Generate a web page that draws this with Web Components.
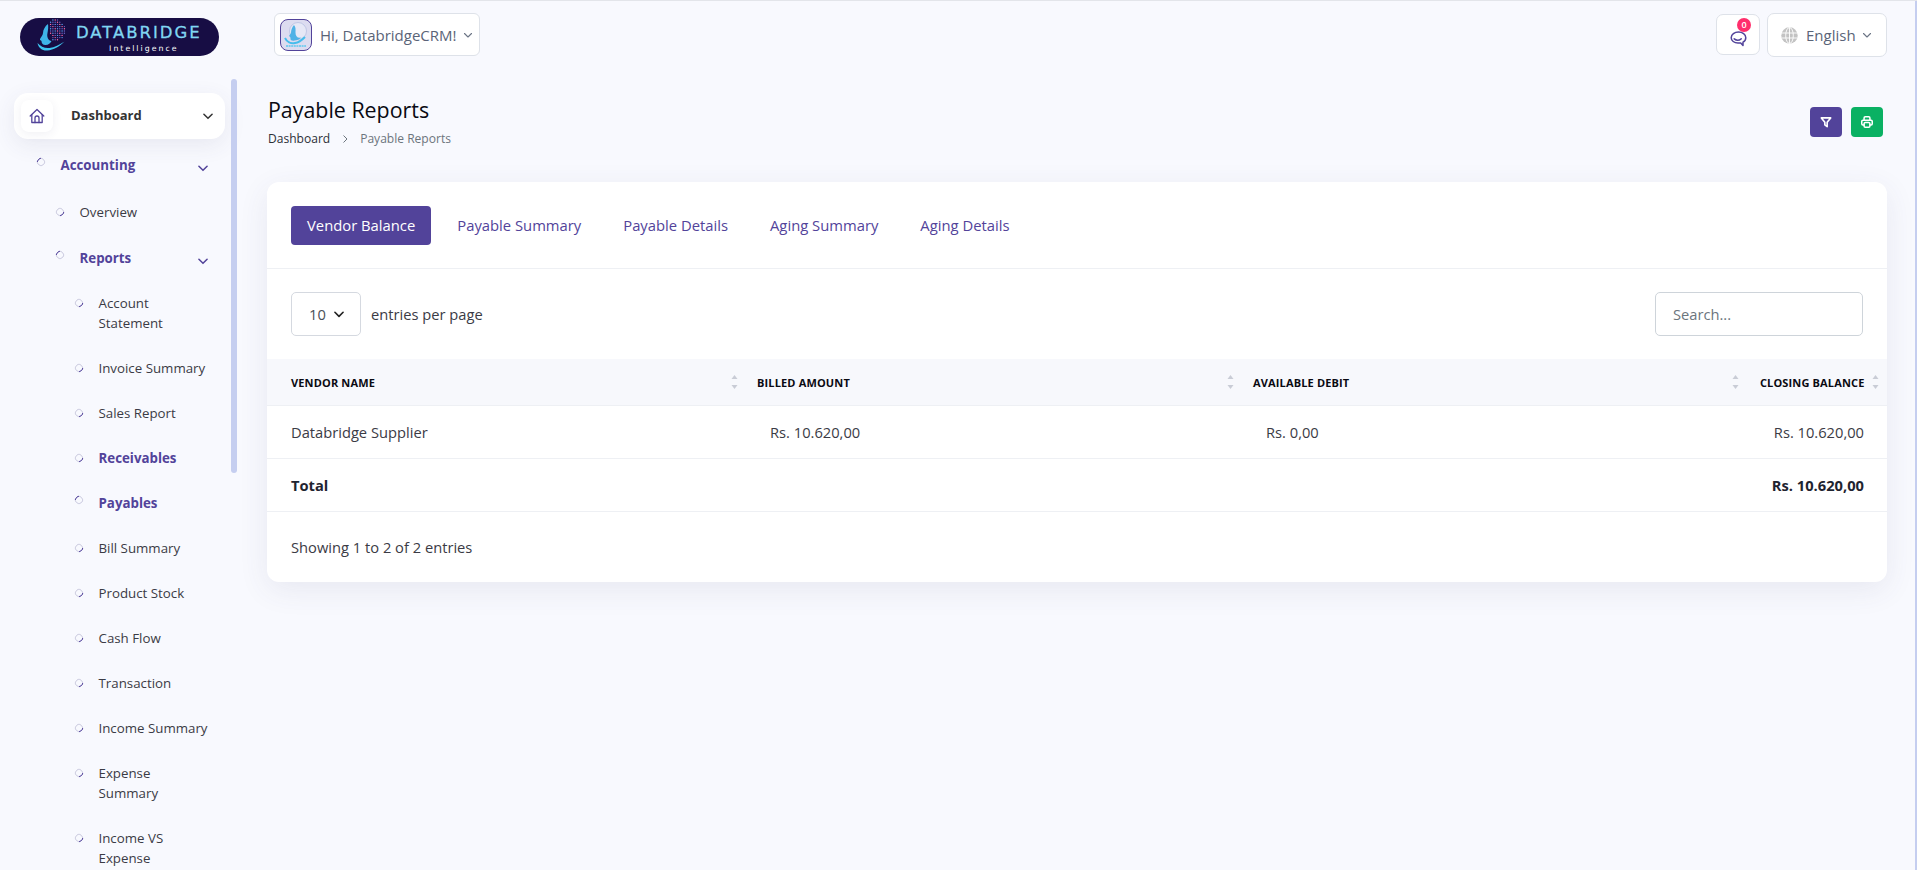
<!DOCTYPE html>
<html lang="en">
<head>
<meta charset="utf-8">
<title>Payable Reports</title>
<style>
  html, body { margin: 0; height: 100%; overflow: hidden; }
  body {
    background: #f8f9fe;
    font-family: "Open Sans", "Liberation Sans", sans-serif;
    color: #333;
    border-top: 1px solid #e3e5ea;
    box-sizing: border-box;
  }
</style>
</head>
<body>
<app-shell>
  <top-bar slot="top">
    <brand-logo></brand-logo>
    <user-menu name="Hi, DatabridgeCRM!"></user-menu>
    <chat-button slot="right" count="0"></chat-button>
    <lang-menu slot="right" lang-name="English"></lang-menu>
  </top-bar>

  <side-nav slot="side">
    <nav-home>Dashboard</nav-home>
    <nav-item level="1" active parent>Accounting</nav-item>
    <nav-item level="2">Overview</nav-item>
    <nav-item level="2" active parent>Reports</nav-item>
    <nav-item level="3">Account Statement</nav-item>
    <nav-item level="3">Invoice Summary</nav-item>
    <nav-item level="3">Sales Report</nav-item>
    <nav-item level="3" bold>Receivables</nav-item>
    <nav-item level="3" active>Payables</nav-item>
    <nav-item level="3">Bill Summary</nav-item>
    <nav-item level="3">Product Stock</nav-item>
    <nav-item level="3">Cash Flow</nav-item>
    <nav-item level="3">Transaction</nav-item>
    <nav-item level="3">Income Summary</nav-item>
    <nav-item level="3">Expense Summary</nav-item>
    <nav-item level="3">Income VS Expense</nav-item>
  </side-nav>

  <page-head heading="Payable Reports" crumb="Dashboard"></page-head>

  <report-card>
    <tab-button slot="tabs" selected>Vendor Balance</tab-button>
    <tab-button slot="tabs">Payable Summary</tab-button>
    <tab-button slot="tabs">Payable Details</tab-button>
    <tab-button slot="tabs">Aging Summary</tab-button>
    <tab-button slot="tabs">Aging Details</tab-button>
    <page-size slot="left" value="10"></page-size>
    <search-box slot="right"></search-box>
    <vendor-table></vendor-table>
    <span slot="foot">Showing 1 to 2 of 2 entries</span>
  </report-card>
</app-shell>

<script>
const chevron = (size, color, width) => `<svg width="${size}" height="${size}" viewBox="0 0 12 12" fill="none" stroke="${color}" stroke-width="${width}" stroke-linecap="round" stroke-linejoin="round"><path d="M2.5 4.5 6 8l3.5-3.5"/></svg>`;

class AppShell extends HTMLElement {
  constructor() {
    super();
    var shadow = this.attachShadow({mode: 'open'});
    shadow.innerHTML = `
    <style>
      :host { display: grid; grid-template-columns: 245px 1fr; grid-template-rows: 75px 1fr; height: 869px; overflow: hidden; position: relative; }
      .top { grid-column: 1 / 3; }
      .side { grid-row: 2; overflow: hidden; }
      main { grid-row: 2; padding: 19px 30px 0 22px; min-width: 0; }
      .page-bar { position: absolute; top: 0; right: 0; width: 2px; height: 100%; background: #c5cef0; }
    </style>
    <div class="top"><slot name="top"></slot></div>
    <div class="side"><slot name="side"></slot></div>
    <main><slot></slot></main>
    <div class="page-bar"></div>`;
  }
}
customElements.define('app-shell', AppShell);

class TopBar extends HTMLElement {
  constructor() {
    super();
    var shadow = this.attachShadow({mode: 'open'});
    shadow.innerHTML = `
    <style>
      :host { display: flex; align-items: flex-start; height: 75px; box-sizing: border-box; padding: 12px 30px 0 20px; }
      .left { display: flex; align-items: flex-start; gap: 55px; flex: 1; }
      .right { display: flex; align-items: flex-start; gap: 7px; }
    </style>
    <div class="left"><slot></slot></div>
    <div class="right"><slot name="right"></slot></div>`;
  }
}
customElements.define('top-bar', TopBar);

class BrandLogo extends HTMLElement {
  constructor() {
    super();
    var shadow = this.attachShadow({mode: 'open'});
    var dots = '';
    // the dotted globe behind the face
    for (var r = 0; r < 10; r++) {
      for (var c = 0; c < 10; c++) {
        var x = 11 + c * 2.3;
        var y = 2 + r * 2.2;
        var dx = x - 20, dy = y - 12;
        if (dx * dx + dy * dy > 110 || x < 14 + (r > 6 ? 3 : 0)) continue;
        var fill = (r * 3 + c * 5) % 4 == 0 ? '#ff6aa8' : (r + c) % 3 == 0 ? '#5aa0f0' : '#6a64c4';
        dots += `<circle cx="${x}" cy="${y}" r=".7" fill="${fill}"/>`;
      }
    }
    shadow.innerHTML = `
    <style>
      :host { display: block; margin-top: 5px; width: 199px; height: 38px; background: #170d44; border-radius: 19px; position: relative; overflow: hidden; flex: none; }
      .pill { display: flex; align-items: center; height: 100%; padding-left: 15px; gap: 7px; }
      .words { display: flex; flex-direction: column; align-items: center; line-height: 1; margin-top: 1px; }
      .name { font: 400 16.500px "DejaVu Sans", sans-serif; letter-spacing: 1.950px; color: #80d6f2; -webkit-text-stroke: .3px #80d6f2; white-space: nowrap; }
      .sub { font: 400 7.800px "DejaVu Sans", sans-serif; letter-spacing: 2px; color: #fff; margin-top: 2px; padding-left: 10px; white-space: nowrap; }
      svg { flex: none; }
    </style>
    <div class="pill">
      <svg width="34" height="38" viewBox="0 0 34 38">
        ${dots}
        <path d="M13 6c-3 2-5 6-5 9 0 2-2 4-3 6-.5 1 1 1.500 1.500 2 0 2 1 4 4 4 3 0 5-2 6-4-3 0-5-4-4-8 .5-3 1-6 .5-9z" fill="#3eb4e8"/>
        <path d="M2.500 25c1 5 5 8 10 7.500 6-.5 12-4 17-9-5 3-10 6-15 6.500-5 .5-9-1.500-12-5z" fill="#3ec4ef"/>
      </svg>
      <div class="words"><span class="name">DATABRIDGE</span><span class="sub">Intelligence</span></div>
    </div>`;
  }
}
customElements.define('brand-logo', BrandLogo);

class UserMenu extends HTMLElement {
  constructor() {
    super();
    var shadow = this.attachShadow({mode: 'open'});
    shadow.innerHTML = `
    <style>
      :host { display: flex; align-items: center; box-sizing: border-box; height: 43px; width: 206px; background: #fff; border: 1px solid #dee2e9; border-radius: 6px; padding: 0 5px 0 5px; color: #5a6478; font-size: 15px; white-space: nowrap; }
      .avatar { width: 32px; height: 32px; box-sizing: border-box; border: 1px solid #52439a; border-radius: 8px; background: #dcdcf0; overflow: hidden; flex: none; }
      span { margin-left: 8px; flex: 1; }
      svg { display: block; }
    </style>
    <div class="avatar">
      <svg width="30" height="30" viewBox="0 0 30 30">
        <circle cx="17" cy="11" r="8.500" fill="#e6e8f6" stroke="#aab6dc" stroke-width=".6"/>
        <path d="M13 5c-2 2-3 5-3 8l-2 3c1 .5 1.500 1 1.500 3 0 1.500 2 2 4 1.500 2 0 5-1 7-3-4 1-6-1-6-5 0-3 .5-5-1.500-7.500z" fill="#4fb2e6"/>
        <path d="M4 18c2 4 6 6 10 5 4-.5 7-3 10-6" stroke="#45bdec" stroke-width="2" fill="none"/>
        <path d="M5 26h20" stroke="#7ccdef" stroke-width="2" stroke-dasharray="2 .6"/>
      </svg>
    </div>
    <span>${this.getAttribute('name')}</span>
    ${chevron(12, '#6b7485', 1.1)}`;
  }
}
customElements.define('user-menu', UserMenu);

class ChatButton extends HTMLElement {
  constructor() {
    super();
    var shadow = this.attachShadow({mode: 'open'});
    shadow.innerHTML = `
    <style>
      :host { display: flex; align-items: center; justify-content: center; position: relative; box-sizing: border-box; width: 44px; height: 41px; margin-top: 1px; background: #fff; border: 1px solid #dee2e9; border-radius: 7px; }
      svg { margin: 7px 0 0 0; }
      .badge { position: absolute; top: 3px; right: 8px; width: 14px; height: 14px; border-radius: 50%; background: #ff2e6c; color: #fff; font-size: 9px; font-weight: 600; line-height: 14px; text-align: center; }
    </style>
    <svg width="17" height="17" viewBox="0 0 17 17" fill="none" stroke="#52439a" stroke-width="1.500" stroke-linecap="round" stroke-linejoin="round">
      <path d="M8.500 2C4.600 2 1.200 4.400 1.200 7.700c0 3 3 5.300 6.800 5.300h2.700l2.300 2.500v-3.300c1.800-1 2.800-2.700 2.800-4.500 0-3.300-3.400-5.700-7.300-5.700z"/>
      <path d="M4.200 8.800c1.900 1.500 5 1.500 7 0"/>
    </svg>
    <div class="badge">${this.getAttribute('count')}</div>`;
  }
}
customElements.define('chat-button', ChatButton);

class LangMenu extends HTMLElement {
  constructor() {
    super();
    var shadow = this.attachShadow({mode: 'open'});
    shadow.innerHTML = `
    <style>
      :host { display: flex; align-items: center; box-sizing: border-box; width: 120px; height: 44px; background: #fff; border: 1px solid #dee2e9; border-radius: 7px; padding: 0 13px 0 13px; color: #5a6478; font-size: 15px; }
      span { margin-left: 8px; flex: 1; }
    </style>
    <svg width="17" height="17" viewBox="0 0 17 17" fill="none">
      <circle cx="8.500" cy="8.500" r="8.200" fill="#c3c3c3"/>
      <g stroke="#fff" stroke-width=".9">
        <path d="M1 6h15M1 11h15M8.500 .5v16"/>
        <ellipse cx="8.500" cy="8.500" rx="3.800" ry="8"/>
      </g>
    </svg>
    <span>${this.getAttribute('lang-name')}</span>
    ${chevron(12, '#6b7485', 1.1)}`;
  }
}
customElements.define('lang-menu', LangMenu);

class SideNav extends HTMLElement {
  constructor() {
    super();
    var shadow = this.attachShadow({mode: 'open'});
    shadow.innerHTML = `
    <style>
      :host { display: block; position: relative; height: 794px; overflow: hidden; padding-top: 17px; box-sizing: border-box; }
      .thumb { position: absolute; left: 231px; top: 3px; width: 6px; height: 394px; border-radius: 3px; background: #c5cef0; }
    </style>
    <slot></slot>
    <div class="thumb"></div>`;
  }
}
customElements.define('side-nav', SideNav);

class NavHome extends HTMLElement {
  constructor() {
    super();
    var shadow = this.attachShadow({mode: 'open'});
    shadow.innerHTML = `
    <style>
      :host { display: flex; align-items: center; box-sizing: border-box; width: 211px; height: 46px; margin: 0 0 3px 14px; padding: 0 10px 0 7px; background: #fff; border-radius: 14px; box-shadow: 0 6px 22px rgba(70,70,110,.09); font-size: 13px; font-weight: 700; color: #333; }
      .icon { display: flex; align-items: center; justify-content: center; width: 32px; height: 32px; border-radius: 8px; background: #fff; box-shadow: 0 2px 10px rgba(70,70,110,.08); }
      .label { margin: -2px 0 0 18px; flex: 1; }
    </style>
    <div class="icon">
      <svg width="16" height="16" viewBox="0 0 16 16" fill="none" stroke="#52439a" stroke-width="1.300" stroke-linejoin="round" stroke-linecap="round">
        <path d="M1.200 8 8 1.500 14.800 8"/>
        <path d="M2.800 6.600V14.500h10.400V6.600"/>
        <path d="M6 14.500V10a2 2 0 0 1 4 0v4.500"/>
      </svg>
    </div>
    <div class="label"><slot></slot></div>
    ${chevron(14, '#333', 1.3)}`;
  }
}
customElements.define('nav-home', NavHome);

class NavItem extends HTMLElement {
  constructor() {
    super();
    var shadow = this.attachShadow({mode: 'open'});
    var level = Number(this.getAttribute('level'));
    var active = this.hasAttribute('active');
    var strong = active || this.hasAttribute('bold');
    var left = 37 + (level - 1) * 19;
    var rowPad = level == 1 ? '12.5px 0 14px' : level == 2 ? '13px 0' : '12.5px 0';
    shadow.innerHTML = `
    <style>
      :host { display: flex; align-items: flex-start; padding: ${rowPad}; font-size: 13.300px; line-height: 20px; color: ${strong ? '#52439a' : '#3b3b45'}; font-weight: ${strong ? 700 : 400}; }
      .bullet { width: 6px; height: 6px; border: 1px solid #cfcfe2; border-radius: 50%; margin: ${active ? 3 : 6}px 15.500px 0 ${left}px; flex: none; transform: rotate(${active ? 45 : -45}deg); border-${active ? 'left' : 'bottom'}-color: #52439a; }
      .text { width: ${level < 3 ? 'auto' : '112px'}; flex: ${level < 3 ? 1 : 'none'}; }
      svg { margin: 6px 35px 0 0; flex: none; }
    </style>
    <div class="bullet"></div>
    <div class="text"><slot></slot></div>
    ${this.hasAttribute('parent') ? chevron(14, '#52439a', 1.3) : ''}`;
  }
}
customElements.define('nav-item', NavItem);

class PageHead extends HTMLElement {
  constructor() {
    super();
    var shadow = this.attachShadow({mode: 'open'});
    var heading = this.getAttribute('heading');
    shadow.innerHTML = `
    <style>
      :host { display: flex; justify-content: space-between; align-items: flex-start; height: 53px; margin-bottom: 34px; padding: 0 4px 0 1px; }
      h1 { margin: 0; font-size: 21.400px; font-weight: 500; line-height: 29px; color: #0a0a12; }
      .crumbs { display: flex; align-items: center; gap: 9px; margin-top: 6px; font-size: 12.050px; line-height: 18px; color: #6c757d; }
      .crumbs b { font-weight: 400; color: #2c3038; }
      .actions { display: flex; gap: 9px; margin-top: 12px; }
      .btn { display: flex; align-items: center; justify-content: center; width: 32px; height: 30px; border-radius: 4px; }
      .filter { background: #52439a; }
      .print { background: #0ab163; }
    </style>
    <div>
      <h1>${heading}</h1>
      <div class="crumbs"><b>${this.getAttribute('crumb')}</b>
        <svg width="12" height="12" viewBox="0 0 12 12" fill="none" stroke="#6c757d" stroke-width="1"><path d="M4.500 2.500 8 6 4.500 9.500"/></svg>
        <span>${heading}</span></div>
    </div>
    <div class="actions">
      <div class="btn filter">
        <svg width="14" height="14" viewBox="0 0 24 24" fill="none" stroke="#fff" stroke-width="2.800" stroke-linejoin="round"><path d="M4 5h16l-6 7.500V20l-4-3v-4.500z"/></svg>
      </div>
      <div class="btn print">
        <svg width="14" height="14" viewBox="0 0 24 24" fill="none" stroke="#fff" stroke-width="2.600" stroke-linecap="round" stroke-linejoin="round">
          <path d="M17 17h2a2 2 0 0 0 2 -2v-4a2 2 0 0 0 -2 -2h-14a2 2 0 0 0 -2 2v4a2 2 0 0 0 2 2h2"/>
          <path d="M17 9v-4a2 2 0 0 0 -2 -2h-6a2 2 0 0 0 -2 2v4"/>
          <path d="M7 15a2 2 0 0 1 2 -2h6a2 2 0 0 1 2 2v4a2 2 0 0 1 -2 2h-6a2 2 0 0 1 -2 -2z"/>
        </svg>
      </div>
    </div>`;
  }
}
customElements.define('page-head', PageHead);

class ReportCard extends HTMLElement {
  constructor() {
    super();
    var shadow = this.attachShadow({mode: 'open'});
    shadow.innerHTML = `
    <style>
      :host { display: block; background: #fff; border-radius: 12px; box-shadow: 0 8px 30px rgba(70,70,110,.09); }
      .tabs { display: flex; gap: 10px; padding: 24px 24px 23px; border-bottom: 1px solid #eef0f4; }
      .tools { display: flex; justify-content: space-between; align-items: center; padding: 23px 24px; }
      .foot { display: flex; align-items: center; height: 70px; padding: 0 24px; font-size: 14.700px; color: #3b3b45; }
    </style>
    <div class="tabs"><slot name="tabs"></slot></div>
    <div class="tools"><slot name="left"></slot><slot name="right"></slot></div>
    <slot></slot>
    <div class="foot"><slot name="foot"></slot></div>`;
  }
}
customElements.define('report-card', ReportCard);

class TabButton extends HTMLElement {
  constructor() {
    super();
    var shadow = this.attachShadow({mode: 'open'});
    var on = this.hasAttribute('selected');
    shadow.innerHTML = `
    <style>
      :host { display: block; height: 39px; box-sizing: border-box; padding: 0 16px; line-height: 39px; font-size: 14.800px; border-radius: 4px; white-space: nowrap; background: ${on ? '#52439a' : 'transparent'}; color: ${on ? '#fff' : '#52439a'}; }
    </style>
    <slot></slot>`;
  }
}
customElements.define('tab-button', TabButton);

class PageSize extends HTMLElement {
  constructor() {
    super();
    var shadow = this.attachShadow({mode: 'open'});
    shadow.innerHTML = `
    <style>
      :host { display: flex; align-items: center; gap: 10px; font-size: 14.700px; color: #3b3b45; }
      .select { display: flex; align-items: center; justify-content: space-between; box-sizing: border-box; width: 70px; height: 44px; padding: 0 14px 0 17px; background: #fff; border: 1px solid #d5d9e0; border-radius: 5px; color: #495057; }
    </style>
    <div class="select"><span>${this.getAttribute('value')}</span>${chevron(14, '#222', 1.4)}</div>
    <span>entries per page</span>`;
  }
}
customElements.define('page-size', PageSize);

class SearchBox extends HTMLElement {
  constructor() {
    super();
    var shadow = this.attachShadow({mode: 'open'});
    shadow.innerHTML = `
    <style>
      :host { display: block; }
      input { display: block; box-sizing: border-box; width: 208px; height: 44px; padding: 0 17px; background: #fff; border: 1px solid #ced4da; border-radius: 5px; font: 14.700px "Open Sans", sans-serif; }
      input::placeholder { color: #6c757d; opacity: 1; }
    </style>
    <input type="text" placeholder="Search...">`;
  }
}
customElements.define('search-box', SearchBox);

class VendorTable extends HTMLElement {
  constructor() {
    super();
    var shadow = this.attachShadow({mode: 'open'});
    var sort = `<svg class="sort" width="7" height="16" viewBox="0 0 7 16" fill="#c9ccd6"><path d="M3.500 1 6.500 5h-6zM3.500 15 .5 11h6z"/></svg>`;
    shadow.innerHTML = `
    <style>
      :host { display: block; }
      table { width: 100%; table-layout: fixed; border-collapse: collapse; }
      th { height: 46px; padding: 0; background: #f7f8fc; border-bottom: 1px solid #eef0f4; font-size: 11px; font-weight: 700; color: #0a0a12; text-transform: uppercase; letter-spacing: .15px; }
      th div { display: flex; align-items: center; justify-content: space-between; padding: 0 7px 0 12px; }
      th:first-child div { padding-left: 24px; }
      th:last-child div { justify-content: flex-end; gap: 7px; padding: 0 8.500px 0 0; }
      td { height: 52px; padding: 0 0 0 25px; border-bottom: 1px solid #eef0f4; font-size: 14.700px; color: #3b3b45; }
      td:first-child { padding-left: 24px; }
      td:last-child { padding: 0 23px 0 0; text-align: right; }
      .sum td { font-weight: 700; color: #1f2430; }
      svg { display: block; flex: none; }
    </style>
    <table>
      <colgroup><col style="width:478px"><col style="width:496px"><col style="width:505px"><col></colgroup>
      <thead><tr>
        <th><div>Vendor Name${sort}</div></th>
        <th><div>Billed Amount${sort}</div></th>
        <th><div>Available Debit${sort}</div></th>
        <th><div>Closing Balance${sort}</div></th>
      </tr></thead>
      <tbody>
        <tr><td>Databridge Supplier</td><td>Rs. 10.620,00</td><td>Rs. 0,00</td><td>Rs. 10.620,00</td></tr>
        <tr class="sum"><td>Total</td><td></td><td></td><td>Rs. 10.620,00</td></tr>
      </tbody>
    </table>`;
  }
}
customElements.define('vendor-table', VendorTable);
</script>
</body>
</html>
